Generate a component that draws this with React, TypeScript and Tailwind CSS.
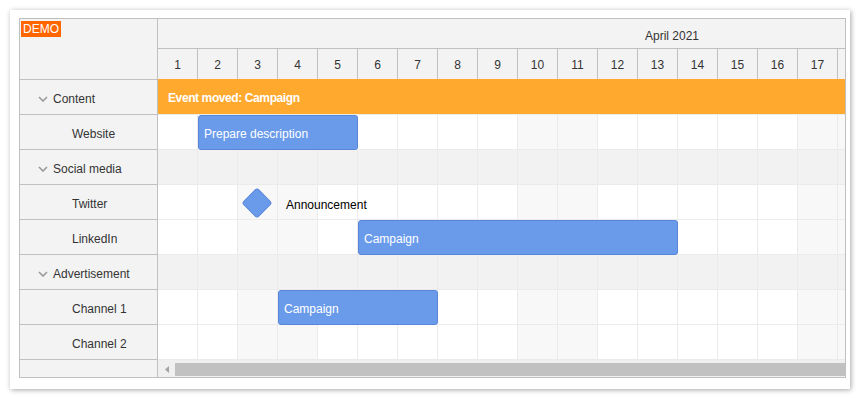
import React from 'react';

type Row = {
    name: string;
    parent?: boolean;
};

type Bar = {
    row: number;
    start: number;
    days: number;
    text: string;
};

const rows: Row[] = [
    { name: 'Content', parent: true },
    { name: 'Website' },
    { name: 'Social media', parent: true },
    { name: 'Twitter' },
    { name: 'LinkedIn' },
    { name: 'Advertisement', parent: true },
    { name: 'Channel 1' },
    { name: 'Channel 2' },
];

const bars: Bar[] = [
    { row: 1, start: 1, days: 4, text: 'Prepare description' },
    { row: 4, start: 5, days: 8, text: 'Campaign' },
    { row: 6, start: 3, days: 4, text: 'Campaign' },
];

const days = Array.from({ length: 18 }, (_, i) => i + 1);
const weekend = [3, 4, 10, 11, 17, 18];

const Chevron = () => (
    <svg width="10" height="6" viewBox="0 0 10 6" className="mr-[5px]">
        <polyline points="1,1 5,5 9,1" fill="none" stroke="#999" strokeWidth="1.6" />
    </svg>
);

const Cells = ({ parent }: { parent?: boolean }) => (
    <div className="flex h-full">
        {days.map((d) => (
            <div
                key={d}
                className={
                    'h-full w-10 shrink-0 border-r border-[#ebebeb] ' +
                    (parent ? 'bg-[#f2f2f2]' : weekend.includes(d) ? 'bg-[#f8f8f8]' : 'bg-white')
                }
            />
        ))}
    </div>
);

export default function App() {
    return (
        <div className="bg-white p-[10px] text-[12px] text-[#333]" style={{ fontFamily: '"Liberation Sans", Arial, sans-serif' }}>
            <div className="h-[379px] w-[840px] bg-white pl-[9px] pt-[8px] shadow-[1px_1px_5px_rgba(0,0,0,0.35)]">
                <div className="flex h-[360px] w-[827px] border border-[#c0c0c0]">
                    {/* row headers */}
                    <div className="flex w-[138px] shrink-0 flex-col border-r border-[#c0c0c0] bg-[#f3f3f3]">
                        <div className="h-[61px] shrink-0 border-b border-[#c0c0c0] pl-px pt-px">
                            <span className="inline-block bg-[#ff6600] px-[2px] leading-[16px] text-white">DEMO</span>
                        </div>
                        {rows.map((r) => (
                            <div
                                key={r.name}
                                className={
                                    'flex h-[35px] shrink-0 items-center border-b border-[#c0c0c0] pt-[3px] ' +
                                    (r.parent ? 'pl-[18px]' : 'pl-[52px]')
                                }
                            >
                                {r.parent && <Chevron />}
                                {r.name}
                            </div>
                        ))}
                        <div className="flex-1" />
                    </div>

                    {/* timeline */}
                    <div className="flex min-w-0 flex-1 flex-col overflow-hidden">
                        <div className="h-[30px] shrink-0 border-b border-[#c0c0c0] bg-[#f3f3f3] pl-[487px] pt-[8px]">
                            April 2021
                        </div>
                        <div className="flex h-[31px] shrink-0 border-b border-[#c0c0c0] bg-[#f3f3f3]">
                            {days.map((d) => (
                                <div key={d} className="flex w-10 shrink-0 items-center justify-center border-r border-[#c0c0c0] pt-[2px]">
                                    {d < 18 ? d : ''}
                                </div>
                            ))}
                        </div>
                        {rows.map((r, i) => (
                            <div key={r.name} className="relative h-[35px] shrink-0 border-b border-[#ebebeb]">
                                <Cells parent={r.parent} />
                                {i === 0 && (
                                    <div className="absolute inset-x-0 -top-px bottom-0 flex items-center bg-[#ffa92e] pl-[10px] pt-[3px] font-bold tracking-[-0.4px] text-white">
                                        Event moved: Campaign
                                    </div>
                                )}
                                {i === 3 && (
                                    <>
                                        <div className="absolute left-[88px] top-[7px] h-[22px] w-[22px] rotate-45 rounded-[3px] border border-[#5885d9] bg-[#6a9bea]" />
                                        <span className="absolute left-[128px] top-[11px] text-black">Announcement</span>
                                    </>
                                )}
                                {bars
                                    .filter((b) => b.row === i)
                                    .map((b) => (
                                        <div
                                            key={b.text + b.row}
                                            className="absolute top-0 flex h-[35px] items-center rounded-[3px] border border-[#5885d9] bg-[#6a9bea] pl-[5px] pt-[3px] text-white"
                                            style={{ left: b.start * 40, width: b.days * 40 }}
                                        >
                                            {b.text}
                                        </div>
                                    ))}
                            </div>
                        ))}
                        <div className="flex flex-1 items-center bg-[#f0f0f0] pt-px">
                            <div className="flex h-[13px] w-[17px] items-center justify-center">
                                <svg width="4" height="7" viewBox="0 0 4 7">
                                    <polygon points="4,0 0,3.5 4,7" fill="#a3a3a3" />
                                </svg>
                            </div>
                            <div className="h-[13px] flex-1 bg-[#c1c1c1]" />
                        </div>
                    </div>
                </div>
            </div>
        </div>
    );
}
